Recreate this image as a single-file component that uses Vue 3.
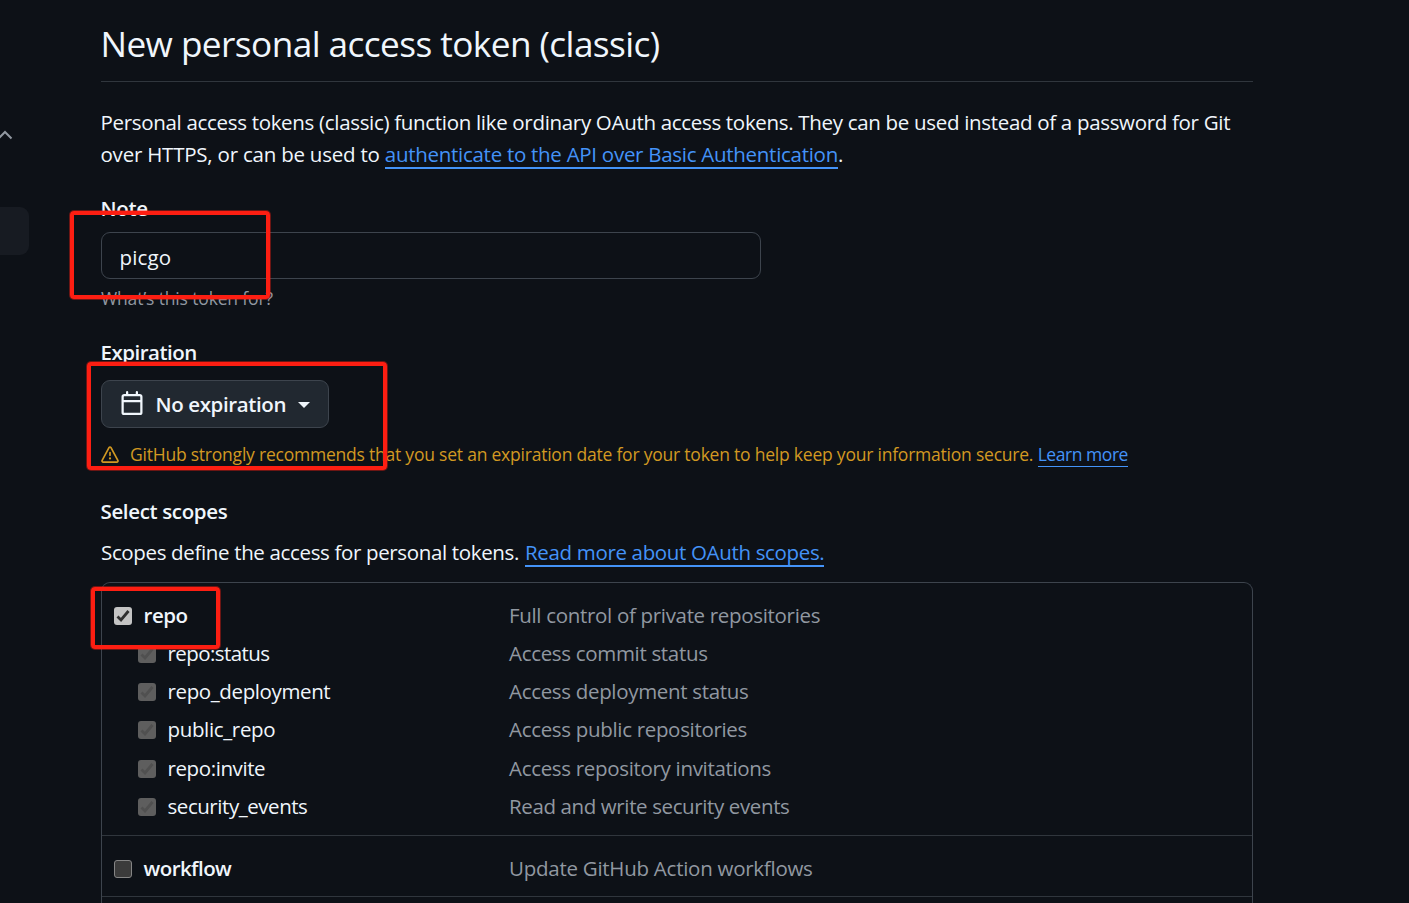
<script setup>
const scopes = [
  { name: 'repo:status', text: 'Access commit status', cls: 's1' },
  { name: 'repo_deployment', text: 'Access deployment status', cls: 's2' },
  { name: 'public_repo', text: 'Access public repositories', cls: 's3' },
  { name: 'repo:invite', text: 'Access repository invitations', cls: 's4' },
  { name: 'security_events', text: 'Read and write security events', cls: 's5' },
]
</script>

<template>
  <div class="page">
    <svg class="chevron" viewBox="0 0 16 12"><path d="M1.500 9.500 8 3l6.500 6.500" /></svg>
    <div class="nav-pill"></div>

    <main class="content">
      <h1><span class="t-title">New personal access token (classic)</span></h1>
      <p class="intro">
        <span class="t-i1">Personal access tokens (classic) function like ordinary OAuth access tokens. They can be used instead of a password for Git</span><br />
        <span class="t-i2">over HTTPS, or can be used to </span><a class="t-i3">authenticate to the API over Basic Authentication</a>.
      </p>

      <label class="label note"><span class="t-note">Note</span></label>
      <div class="input"><span class="t-picgo">picgo</span></div>
      <p class="caption"><span class="t-cap">What’s this token for?</span></p>

      <label class="label exp"><span class="t-exp">Expiration</span></label>
      <button class="select">
        <svg class="cal" viewBox="0 0 16 16"><path d="M4.750 0a.75.75 0 0 1 .75.75V2h5V.75a.75.75 0 0 1 1.500 0V2h1.250c.966 0 1.750.784 1.750 1.750v10.500A1.750 1.750 0 0 1 13.250 16H2.750A1.750 1.750 0 0 1 1 14.250V3.750C1 2.784 1.784 2 2.750 2H4V.75A.75.75 0 0 1 4.750 0ZM2.500 7.500v6.750c0 .138.112.25.25.25h10.500a.25.25 0 0 0 .25-.25V7.500Zm10.750-4H2.750a.25.25 0 0 0-.25.25V6h11V3.750a.25.25 0 0 0-.25-.25Z" /></svg>
        <span class="t-noexp">No expiration</span>
        <i class="caret"></i>
      </button>
      <p class="warning">
        <svg viewBox="0 0 16 16"><path d="M6.457 1.047c.659-1.234 2.427-1.234 3.086 0l6.082 11.378A1.750 1.750 0 0 1 14.082 15H1.918a1.750 1.750 0 0 1-1.543-2.575Zm1.763.707a.25.25 0 0 0-.44 0L1.698 13.132a.25.25 0 0 0 .22.368h12.164a.25.25 0 0 0 .22-.368Zm.53 3.996v2.500a.75.75 0 0 1-1.500 0v-2.500a.75.75 0 0 1 1.500 0ZM9 11a1 1 0 1 1-2 0 1 1 0 0 1 2 0Z" /></svg>
        <span class="t-warn">GitHub strongly recommends that you set an expiration date for your token to help keep your information secure.</span>
        <a class="t-learn">Learn more</a>
      </p>

      <h2><span class="t-sel">Select scopes</span></h2>
      <p class="scopes-intro"><span class="t-def">Scopes define the access for personal tokens.</span><a class="t-read">Read more about OAuth scopes.</a></p>

      <section class="list">
        <div class="group repo">
          <div class="row">
            <span class="box on"><svg viewBox="0 0 18 18"><path d="M3.500 9.500 7 13l7.500-9" /></svg></span>
            <b class="name t-repo">repo</b>
            <span class="desc">Full control of private repositories</span>
          </div>
          <div v-for="s in scopes" :key="s.name" class="row sub" :class="s.cls">
            <span class="box dim"><svg viewBox="0 0 18 18"><path d="M3.500 9.500 7 13l7.500-9" /></svg></span>
            <span class="name">{{ s.name }}</span>
            <span class="desc">{{ s.text }}</span>
          </div>
        </div>
        <div class="group flow">
          <div class="row">
            <span class="box off"></span>
            <b class="name t-flow">workflow</b>
            <span class="desc d6">Update GitHub Action workflows</span>
          </div>
        </div>
      </section>
    </main>

    <div class="mark m1"></div>
    <div class="mark m2"></div>
    <div class="mark m3"></div>
  </div>
</template>

<style>
body { margin: 0; background: #0d1117; }
</style>

<style scoped>
* { box-sizing: border-box; }
.page {
  position: relative; width: 1409px; height: 903px; overflow: hidden;
  background: #0d1117; color: #f0f6fc;
  font: 20.5px/32px "Open Sans", "Noto Sans", sans-serif;
}
p, h1, h2 { margin: 0; font-weight: 400; white-space: nowrap; }
a { color: #4493f8; border-bottom: 2px solid #4493f8; }
.chevron { position: absolute; left: -3px; top: 129px; width: 16px; height: 12px; fill: none; stroke: #9198a1; stroke-width: 2; }
.nav-pill { position: absolute; left: -20px; top: 207px; width: 49px; height: 48px; border-radius: 9px; background: #171b22; }
.content { margin-left: 101px; width: 1152px; display: flex; flex-direction: column; }
h1 { height: 82px; padding-top: 16px; border-bottom: 1px solid #30363d; font-size: 35.2px; line-height: 54px; }
.intro { margin-top: 24px; height: 64px; margin-left: -0.5px; }
.intro a, .scopes-intro a { line-height: 24px; display: inline-block; height: 27px; }
.label { font-weight: 600; height: 32px; white-space: nowrap; margin-left: -0.5px; }
.note { margin-top: 22px; }
.input { margin-top: 8px; width: 660px; height: 47px; border: 1px solid #3d444d; border-radius: 9px; padding: 8px 17.500px; }
.caption { font-size: 17.500px; line-height: 26px; color: #9198a1; margin-top: 6px; }
.exp { margin-top: 25px; }
.select {
  margin: 12px 0 0; width: 228px; height: 48px; padding: 0 18px; display: flex; align-items: center;
  background: #212830; border: 1px solid #3d444d; border-radius: 9px; color: #f0f6fc;
  font: 600 20.5px/32px "Open Sans", "Noto Sans", sans-serif; white-space: nowrap;
}
.cal { width: 24px; height: 24px; fill: currentColor; margin: -2px 11.500px 0 0; flex: none; }
.caret { border: 6px solid transparent; border-top-color: #f0f6fc; border-bottom: 0; margin: 2px 0 0 auto; }
.warning { display: flex; align-items: center; margin-top: 13px; height: 26px; font-size: 17.500px; line-height: 26px; color: #d29922; }
.warning svg { width: 18px; height: 18px; fill: currentColor; margin: 1px 11px 0 0; flex: none; }
.warning a { border-bottom-width: 1px; line-height: 24px; height: 25px; margin-left: auto; margin-right: 125px; }
h2 { font-size: 20.5px; font-weight: 600; margin-top: 28px; margin-left: -0.5px; height: 32px; }
.scopes-intro { margin-top: 9px; height: 32px; display: flex; }
.scopes-intro a { margin-left: 6px; margin-top: 4px; }
.list { margin-top: 14px; height: 340px; border: 1px solid #3d444d; border-bottom: 0; border-radius: 9px 9px 0 0; }
.group { border-bottom: 1px solid #30363d; }
.repo { height: 253px; padding-top: 13px; }
.flow { height: 61px; padding-top: 13px; }
.row { display: grid; grid-template-columns: 29.500px 365.500px 1fr; padding-left: 12px; height: 38px; line-height: 38px; align-items: center; white-space: nowrap; }
.sub { grid-template-columns: 29.500px 341.500px 1fr; padding-left: 36px; }
.s4 { margin-top: 1px; }
b { font-weight: 600; }
.desc { color: #9198a1; letter-spacing: -0.32px; }
.box { width: 18px; height: 18px; border-radius: 3px; display: block; position: relative; top: 1px; }
.box svg { display: block; fill: none; stroke: #303030; stroke-width: 2.800; }
.on { background: #c4c4c4; }
.dim { background: #5e5e5e; }
.dim svg { stroke: #505050; }
.off { background: #3b3b3b; border: 1px solid #858585; }

/* tracking */
.t-title { letter-spacing: -0.57px; margin-left: -0.5px; }
.t-i1 { letter-spacing: -0.315px; }
.t-i2 { letter-spacing: -0.22px; }
.t-i3 { letter-spacing: -0.28px; }
.t-note { letter-spacing: -0.3px; }
.t-picgo { letter-spacing: 0.15px; }
.t-cap { letter-spacing: -0.15px; }
.t-exp { letter-spacing: -0.5px; }
.t-noexp { letter-spacing: -0.38px; }
.t-warn { letter-spacing: -0.22px; }
.t-learn { letter-spacing: -0.45px; }
.t-sel { letter-spacing: -0.36px; }
.t-def { letter-spacing: -0.35px; }
.t-read { letter-spacing: -0.34px; }
.t-repo { letter-spacing: -0.45px; }
.t-flow { letter-spacing: -0.55px; }
.s1 .name { letter-spacing: -0.57px; }
.s2 .name { letter-spacing: -0.38px; }
.s3 .name { letter-spacing: -0.35px; }
.s4 .name { letter-spacing: -0.4px; }
.s5 .name { letter-spacing: -0.45px; }
.s5 .desc { letter-spacing: -0.38px; }
.d6 { letter-spacing: -0.26px; }

.mark { position: absolute; border: 4px solid #fd1e12; border-radius: 4px; box-shadow: 0 0 0 1px rgba(253, 30, 18, 0.4); }
.m1 { left: 70px; top: 211px; width: 200px; height: 88px; }
.m2 { left: 87px; top: 362px; width: 300px; height: 108px; }
.m3 { left: 91px; top: 587px; width: 129px; height: 62px; }
</style>
